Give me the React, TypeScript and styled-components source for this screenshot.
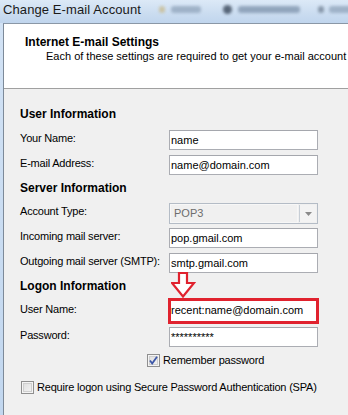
import React from "react";
import styled, { createGlobalStyle } from "styled-components";

const Global = createGlobalStyle`
  html, body { margin: 0; padding: 0; }
  body { width: 348px; height: 415px; overflow: hidden; background: #c7dbf1; }
  * { box-sizing: border-box; }
`;

const Window = styled.div`
  width: 348px;
  height: 415px;
  display: flex;
  flex-direction: column;
  background: linear-gradient(180deg, #d3e3f5 0%, #c2d7ef 100%);
  font-family: "Liberation Sans", Arial, sans-serif;
  font-size: 11px;
  color: #000;
  overflow: hidden;
`;

const TitleBar = styled.div`
  height: 23px;
  flex: none;
  display: flex;
  align-items: center;
  padding-left: 3px;
  background: linear-gradient(180deg, #dce9f7 0%, #cadcf0 60%, #c0d5ed 100%);
  overflow: hidden;
`;

const Title = styled.span`
  font-family: "Liberation Sans", Arial, sans-serif;
  font-size: 13px;
  color: #1a1a1a;
  letter-spacing: 0.1px;
  margin-right: 18px;
  margin-top: -4px;
  white-space: nowrap;
`;

const Blur = styled.span<{ $w: number; $c: string; $round?: boolean; $mr: number }>`
  display: inline-block;
  flex: none;
  width: ${(p) => p.$w}px;
  height: ${(p) => (p.$round ? 9 : 7)}px;
  border-radius: ${(p) => (p.$round ? "50%" : "3px")};
  background: ${(p) => p.$c};
  filter: blur(1.8px);
  margin-right: ${(p) => p.$mr}px;
  margin-top: -5px;
  opacity: 0.75;
`;

const Body = styled.div`
  flex: 1;
  margin-left: 3px;
  border-left: 1px solid #7d8a99;
  border-top: 1px solid #8a97a6;
  display: flex;
  flex-direction: column;
  background: #f0f0f0;
`;

const Header = styled.div`
  height: 65px;
  flex: none;
  background: #fff;
  border-bottom: 1px solid #a0a0a0;
  padding: 11px 0 0 21px;
  overflow: hidden;
`;

const HeaderTitle = styled.div`
  font-weight: bold;
  font-size: 12px;
  line-height: 14px;
`;

const HeaderSub = styled.div`
  margin-left: 21px;
  font-size: 11px;
  line-height: 14px;
  white-space: nowrap;
`;

const Form = styled.div`
  padding: 18px 0 0 16px;
  display: flex;
  flex-direction: column;
`;

const Section = styled.div<{ $mt: number }>`
  font-weight: bold;
  font-size: 12px;
  line-height: 15px;
  margin-top: ${(p) => p.$mt}px;
`;

const Row = styled.div<{ $mt: number }>`
  display: grid;
  grid-template-columns: 149px 149px;
  align-items: start;
  margin-top: ${(p) => p.$mt}px;
  position: relative;
`;

const Label = styled.div`
  line-height: 14px;
  padding-top: 1px;
  white-space: nowrap;
  letter-spacing: -0.2px;
`;

const Input = styled.div`
  height: 20px;
  border: 1px solid #abadb3;
  border-top-color: #a5a7ad;
  background: #fff;
  padding-left: 1px;
  line-height: 18px;
  font-size: 11px;
  white-space: nowrap;
  overflow: hidden;
`;

const Select = styled.div`
  height: 21px;
  border: 1px solid #b4bcc6;
  background: #f0f0f0;
  display: flex;
  align-items: stretch;
`;

const SelectText = styled.div`
  flex: 1;
  color: #6d6d6d;
  padding-left: 3px;
  line-height: 17px;
  border: 1px solid #f7f7f7;
`;

const SelectButton = styled.div`
  width: 17px;
  border-left: 1px solid #c7ced6;
  background: #f3f3f3;
  display: flex;
  align-items: center;
  justify-content: center;
  margin: 1px;
`;

const Highlight = styled.div`
  margin: -3px 0 0 -1px;
  width: 151px;
  height: 26px;
  border: 3px solid #e0222e;
`;

const InnerInput = styled(Input)`
  border: none;
  height: 20px;
  padding-left: 0;
  line-height: 19px;
`;

const Arrow = styled.svg`
  position: absolute;
  left: 151px;
  top: -29px;
`;

const CheckRow = styled.label<{ $ml: number; $mt: number }>`
  display: flex;
  align-items: center;
  gap: 3px;
  margin-left: ${(p) => p.$ml}px;
  margin-top: ${(p) => p.$mt}px;
  line-height: 14px;
  white-space: nowrap;
  letter-spacing: -0.2px;
`;

const Box = styled.span`
  width: 13px;
  height: 13px;
  border: 1px solid #8f8f8f;
  background: linear-gradient(135deg, #dcdcdc 0%, #f6f6f6 100%);
  box-shadow: inset 0 0 0 1px #f4f4f4, inset 0 0 0 2px #cfcfcf;
  display: inline-flex;
  align-items: center;
  justify-content: center;
  flex: none;
`;

const Check = () => (
  <svg width="11" height="11" viewBox="0 0 11 11">
    <path d="M2 5.5 L4.2 8.5 L9 1.8" fill="none" stroke="#3d57a8" strokeWidth="1.8" />
  </svg>
);

const Field = ({ label, value, mt }: { label: string; value: string; mt: number }) => (
  <Row $mt={mt}>
    <Label>{label}</Label>
    <Input>{value}</Input>
  </Row>
);

export default function App() {
  return (
    <>
      <Global />
      <Window>
        <TitleBar>
          <Title>Change E-mail Account</Title>
          <Blur $w={6} $c="#c8b98a" $mr={6} />
          <Blur $w={30} $c="#8fa3ba" $mr={22} />
          <Blur $w={9} $c="#2f3d4f" $round $mr={6} />
          <Blur $w={62} $c="#7d92ab" $mr={18} />
          <Blur $w={6} $c="#6f7f92" $mr={5} />
          <Blur $w={30} $c="#8fa3ba" $mr={0} />
        </TitleBar>
        <Body>
          <Header>
            <HeaderTitle>Internet E-mail Settings</HeaderTitle>
            <HeaderSub>Each of these settings are required to get your e-mail account</HeaderSub>
          </Header>
          <Form>
            <Section $mt={0}>User Information</Section>
            <Field label="Your Name:" value="name" mt={8} />
            <Field label="E-mail Address:" value="name@domain.com" mt={5} />
            <Section $mt={6}>Server Information</Section>
            <Row $mt={7}>
              <Label>Account Type:</Label>
              <Select>
                <SelectText>POP3</SelectText>
                <SelectButton>
                  <svg width="7" height="4" viewBox="0 0 7 4">
                    <path d="M0 0 L7 0 L3.5 4 Z" fill="#8a8a8a" />
                  </svg>
                </SelectButton>
              </Select>
            </Row>
            <Field label="Incoming mail server:" value="pop.gmail.com" mt={4} />
            <Field label="Outgoing mail server (SMTP):" value="smtp.gmail.com" mt={5} />
            <Section $mt={6}>Logon Information</Section>
            <Row $mt={7}>
              <Label>User Name:</Label>
              <Highlight>
                <InnerInput>recent:name@domain.com</InnerInput>
              </Highlight>
              <Arrow width="25" height="27" viewBox="0 0 25 27">
                <path
                  d="M8 1 L16 1 L16 11 L23 11 L12 24.5 L1 11 L8 11 Z"
                  fill="#fff"
                  stroke="#e0222e"
                  strokeWidth="2.2"
                  strokeLinejoin="miter"
                />
              </Arrow>
            </Row>
            <Field label="Password:" value="**********" mt={3} />
            <CheckRow $ml={127} $mt={6}>
              <Box>
                <Check />
              </Box>
              Remember password
            </CheckRow>
            <CheckRow $ml={1} $mt={13}>
              <Box />
              Require logon using Secure Password Authentication (SPA)
            </CheckRow>
          </Form>
        </Body>
      </Window>
    </>
  );
}
